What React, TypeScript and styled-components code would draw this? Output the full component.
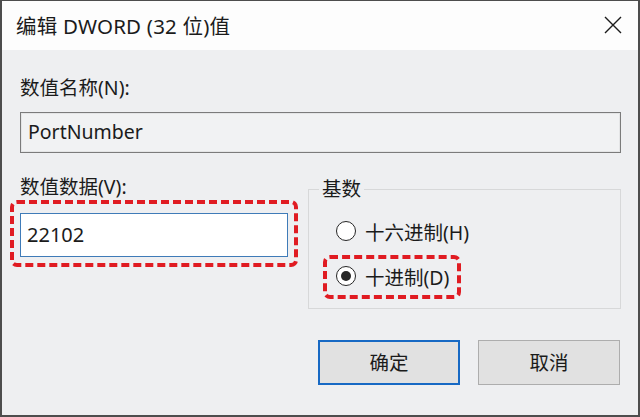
import React, { useState } from "react";
import styled, { createGlobalStyle } from "styled-components";

const GlobalStyle = createGlobalStyle`
  html, body {
    margin: 0;
    padding: 0;
    background: #eeeff1;
  }
  * {
    box-sizing: border-box;
  }
`;

const fontStack = `"Noto Sans", "Noto Sans CJK SC", sans-serif`;

const Window = styled.div`
  width: 640px;
  height: 417px;
  border: 2px solid #4d4d4d;
  border-top-width: 1px;
  background: #eeeff1;
  font-family: ${fontStack};
  color: #1b1b1b;
  display: flex;
  flex-direction: column;
  overflow: hidden;
`;

const TitleBar = styled.div`
  height: 49px;
  flex: 0 0 auto;
  background: #fdfdfd;
  display: flex;
  align-items: center;
  justify-content: space-between;
  padding: 0 15px 2px 14px;
`;

const Title = styled.span`
  font-size: 20.5px;
  letter-spacing: 0.2px;
`;

const CloseButton = styled.button`
  border: none;
  background: none;
  padding: 0;
  width: 20px;
  height: 20px;
  display: flex;
  align-items: center;
  justify-content: center;
`;

const Body = styled.div`
  flex: 1 1 auto;
  padding: 26px 17px 0 18px;
  display: flex;
  flex-direction: column;
`;

const Label = styled.div`
  font-size: 19.5px;
  line-height: 24px;
`;

const NameField = styled.div`
  margin-top: 12px;
  height: 41px;
  border: 1px solid #7b7b7b;
  box-shadow: inset 0 0 0 1px #e4e5e6;
  background: #f1f2f3;
  font-size: 19.5px;
  display: flex;
  align-items: center;
  padding-left: 7px;
  padding-bottom: 2px;
`;

const DataRow = styled.div`
  display: flex;
  margin-top: 22px;
  gap: 10px;
`;

const LeftColumn = styled.div`
  width: 278px;
  flex: 0 0 auto;
  display: flex;
  flex-direction: column;
`;

const Highlight = styled.div<{ $pad: string }>`
  border: 4px dashed #e01b22;
  border-radius: 7px;
  padding: ${(p) => p.$pad};
`;

const DataHighlight = styled(Highlight)`
  margin-left: -10px;
  margin-top: 1px;
  width: 288px;
`;

const ValueInput = styled.input`
  display: block;
  width: 268px;
  height: 44px;
  border: 1px solid #3f7bb8;
  background: #ffffff;
  font-family: ${fontStack};
  font-size: 20px;
  color: #1b1b1b;
  padding: 0 0 2px 6px;
  outline: none;
`;

const GroupBox = styled.fieldset`
  flex: 1 1 auto;
  margin: 0;
  margin-top: 2px;
  height: 132px;
  border: 1px solid #d7d8d9;
  padding: 15px 0 0 14px;
  display: flex;
  flex-direction: column;
`;

const Legend = styled.legend`
  font-size: 19.5px;
  padding: 0 3px;
  margin-left: -4px;
  line-height: 24px;
`;

const RadioRow = styled.label<{ $indent?: number }>`
  display: flex;
  align-items: center;
  gap: 9px;
  font-size: 19.5px;
  height: 30px;
  padding-left: ${(p) => p.$indent ?? 0}px;
`;

const RadioHighlight = styled(Highlight)`
  align-self: flex-start;
  margin-top: 9px;
`;

const RadioCircle = styled.span<{ $checked: boolean }>`
  flex: 0 0 auto;
  width: 20px;
  height: 20px;
  border-radius: 50%;
  border: 1.6px solid #262626;
  background: #fff;
  display: flex;
  align-items: center;
  justify-content: center;
  &::after {
    content: "";
    width: 10px;
    height: 10px;
    border-radius: 50%;
    background: #262626;
    display: ${(p) => (p.$checked ? "block" : "none")};
  }
`;

const ButtonRow = styled.div`
  display: flex;
  justify-content: flex-end;
  gap: 18px;
  margin-top: 31px;
  padding-right: 1px;
`;

const Button = styled.button<{ $primary?: boolean }>`
  width: 142px;
  height: 45px;
  font-family: ${fontStack};
  font-size: 19.5px;
  color: #1b1b1b;
  background: #e1e1e1;
  border: ${(p) => (p.$primary ? "2px solid #1769c4" : "1px solid #adadad")};
  padding: 0 0 2px;
`;

const CloseIcon = () => (
  <svg width="18" height="18" viewBox="0 0 18 18">
    <path d="M1 1 L17 17 M17 1 L1 17" stroke="#1b1b1b" strokeWidth="1.4" />
  </svg>
);

export default function App() {
  const [value, setValue] = useState("22102");
  const [base, setBase] = useState<"hex" | "dec">("dec");

  return (
    <>
      <GlobalStyle />
      <Window>
        <TitleBar>
          <Title>编辑 DWORD (32 位)值</Title>
          <CloseButton aria-label="关闭">
            <CloseIcon />
          </CloseButton>
        </TitleBar>
        <Body>
          <Label>数值名称(N):</Label>
          <NameField>PortNumber</NameField>
          <DataRow>
            <LeftColumn>
              <Label>数值数据(V):</Label>
              <DataHighlight $pad="9px 6px 6px">
                <ValueInput value={value} onChange={(e) => setValue(e.target.value)} />
              </DataHighlight>
            </LeftColumn>
            <GroupBox>
              <Legend>基数</Legend>
              <RadioRow $indent={13} onClick={() => setBase("hex")}>
                <RadioCircle $checked={base === "hex"} />
                十六进制(H)
              </RadioRow>
              <RadioHighlight $pad="2px 8px 4px 9px">
                <RadioRow onClick={() => setBase("dec")}>
                  <RadioCircle $checked={base === "dec"} />
                  十进制(D)
                </RadioRow>
              </RadioHighlight>
            </GroupBox>
          </DataRow>
          <ButtonRow>
            <Button $primary>确定</Button>
            <Button>取消</Button>
          </ButtonRow>
        </Body>
      </Window>
    </>
  );
}
